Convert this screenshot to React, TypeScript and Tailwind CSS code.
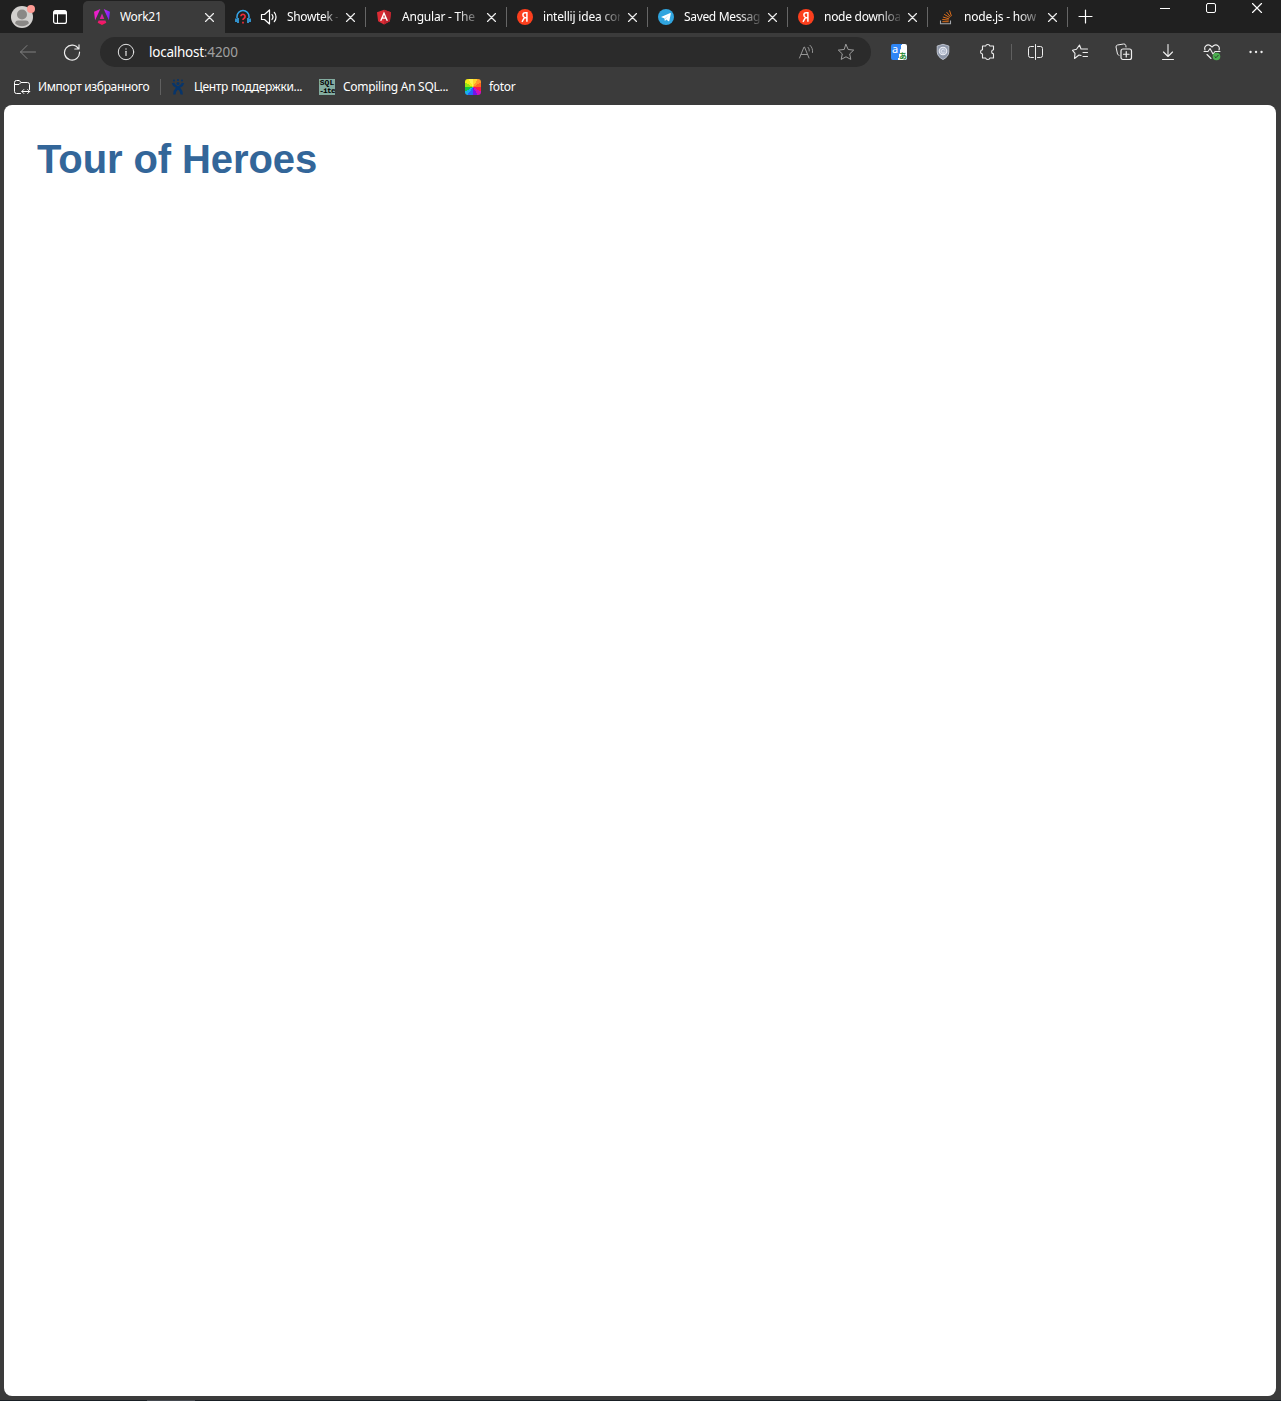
import type { ReactNode } from "react";

type IconProps = { children: ReactNode; className?: string; size?: number };

function Line({ children, className = "", size = 16 }: IconProps) {
  return (
    <svg
      width={size}
      height={size}
      viewBox={`0 0 ${size} ${size}`}
      fill="none"
      stroke="currentColor"
      strokeWidth="1"
      strokeLinecap="round"
      strokeLinejoin="round"
      className={`shrink-0 ${className}`}
    >
      {children}
    </svg>
  );
}

function AngularGradient() {
  return (
    <svg width="16" height="16" viewBox="0 0 16 16" className="shrink-0">
      <defs>
        <linearGradient id="ng" x1="0" y1="0" x2="16" y2="3" gradientUnits="userSpaceOnUse">
          <stop offset="0" stopColor="#f618b8" />
          <stop offset="0.5" stopColor="#d72be8" />
          <stop offset="1" stopColor="#7a22ff" />
        </linearGradient>
        <linearGradient id="ng2" x1="0" y1="5" x2="0" y2="16" gradientUnits="userSpaceOnUse">
          <stop offset="0" stopColor="#c42bc0" />
          <stop offset="1" stopColor="#ff1450" />
        </linearGradient>
      </defs>
      <path d="M0 2.700 6.300 0 1.100 11.200ZM9.700 0 16 2.700 14.900 11.200Z" fill="url(#ng)" />
      <path d="M8 4.600 10.300 10H5.700ZM4.600 11.600h6.800l.9 2.100L8 16l-4.300-2.300Z" fill="url(#ng2)" />
    </svg>
  );
}

function Headphones() {
  return (
    <svg width="16" height="16" viewBox="0 0 16 16" fill="none" className="shrink-0">
      <path d="M2 9V7.500a6 6 0 0 1 12 0V9" stroke="#35a4e8" strokeWidth="1.5" />
      <path d="M1 9.500v3.500M15 9.500v3.500M3 9v5M13 9v5" stroke="#35a4e8" strokeWidth="1.7" />
      <path d="M5.900 7.300a2.100 2.100 0 1 1 3.200 1.900c-.8.4-1.100.8-1.100 1.700M8 12.800v1.700" stroke="#ef2b3a" strokeWidth="1.7" />
    </svg>
  );
}

function AngularShield() {
  return (
    <svg width="16" height="16" viewBox="0 0 16 16" className="shrink-0">
      <path d="M8 .8 15 3.200 13.900 12.300 8 15.600 2.100 12.300 1 3.200Z" fill="#dd2c35" />
      <path d="M8 .8 15 3.200 13.900 12.300 8 15.600Z" fill="#bd242f" />
      <path d="M8 2.600 4 11.800h1.600l.8-2h3.200l.8 2H12ZM8 5.700l1 2.700H7Z" fill="#fff" fillRule="evenodd" />
    </svg>
  );
}

function Yandex() {
  return (
    <svg width="16" height="16" viewBox="0 0 16 16" className="shrink-0">
      <circle cx="8" cy="8" r="8" fill="#fc3f1d" />
      <path d="M9.900 12.800V3.700H8.300c-1.500 0-2.400.8-2.400 2.200 0 1.200.6 1.900 1.600 2.600L5 12.800M7.600 8.700h2.100" fill="none" stroke="#fff" strokeWidth="1.5" />
    </svg>
  );
}

function Telegram() {
  return (
    <svg width="16" height="16" viewBox="0 0 16 16" className="shrink-0">
      <circle cx="8" cy="8" r="8" fill="#30a5df" />
      <path d="M3 7.900 12.300 4.100c.4-.1.600.1.500.6l-1.500 7.200c-.1.500-.4.600-.8.300L8.300 10.600l-1.100 1.100c-.3.200-.5.100-.5-.2l-.2-2.100Z" fill="#fff" />
      <path d="m6.600 9.500 4.200-3.500-3.500 4Z" fill="#b9def2" />
    </svg>
  );
}

function StackOverflow() {
  return (
    <svg width="16" height="16" viewBox="0 0 16 16" fill="none" className="shrink-0">
      <path d="M2.500 11.500v3.200h10v-3.200" stroke="#a5a8ac" strokeWidth="1.1" />
      <path d="M4.300 12.700h6.400M4.300 10.500l6.500.6M4.900 8l6.200 1.900M6.200 5.300l5.500 3.300M8.500 3l4 4.900M11.500 1.300l1.900 5.800" stroke="#e8731b" strokeWidth=".95" />
    </svg>
  );
}

function Speaker() {
  return (
    <Line size={18} className="text-white">
      <path d="M1.500 6.500h3L9.500 2v14l-5-4.500h-3ZM12 6.500c1.200 1.500 1.200 3.500 0 5M14.300 4.300c2.300 2.700 2.300 6.700 0 9.400" strokeWidth="1.2" />
    </Line>
  );
}

function CloseMark() {
  return (
    <Line size={10} className="text-[#eeeeee]">
      <path d="m1.500 1.500 8 8M9.500 1.500l-8 8" strokeWidth="1.15" />
    </Line>
  );
}

type TabData = {
  title: string;
  icon: ReactNode;
  active?: boolean;
  audio?: boolean;
  width: string;
  spacing: string;
};

const tabs: TabData[] = [
  { title: "Work21", icon: <AngularGradient />, active: true, width: "w-[142px]", spacing: "tracking-[-0.3px]" },
  { title: "Showtek -", icon: <Headphones />, audio: true, width: "w-[141px]", spacing: "tracking-[-0.35px]" },
  { title: "Angular - The", icon: <AngularShield />, width: "w-[141px]", spacing: "tracking-[-0.22px]" },
  { title: "intellij idea cor", icon: <Yandex />, width: "w-[141px]", spacing: "tracking-[-0.2px]" },
  { title: "Saved Messag", icon: <Telegram />, width: "w-[140px]", spacing: "tracking-[-0.33px]" },
  { title: "node downloa", icon: <Yandex />, width: "w-[140px]", spacing: "tracking-[-0.28px]" },
  { title: "node.js - how", icon: <StackOverflow />, width: "w-[140px]", spacing: "tracking-[-0.22px]" },
];

function Tab({ title, icon, active, audio, width, spacing }: TabData) {
  return (
    <div
      className={`flex h-8 shrink-0 items-center pr-[11px] ${width} ${
        active ? "rounded-t-[5px] bg-[#3b3b3b] pl-[11px]" : "pl-[10px]"
      }`}
    >
      {icon}
      {audio && <div className="ml-[9px] -mr-px"><Speaker /></div>}
      <div
        className={`ml-[10px] flex-1 overflow-hidden whitespace-nowrap text-[12px] leading-4 text-white ${spacing} ${
          active ? "" : "mask-r-from-72% mask-r-to-105%"
        }`}
      >
        {title}
      </div>
      <div className={active ? "ml-2" : "ml-[7px]"}><CloseMark /></div>
      {!active && <div className="-mr-[11px] ml-[10px] h-5 w-px bg-[#666666]" />}
    </div>
  );
}

function TitleBar() {
  return (
    <div className="flex h-[33px] items-end bg-[#202020]">
      <div className="flex h-8 w-[83px] shrink-0 items-center pl-[10px]">
        <svg width="26" height="26" viewBox="0 0 26 26">
          <circle cx="12" cy="13" r="11" fill="#d2d0ce" />
          <circle cx="12" cy="10.5" r="5" fill="#8a8886" />
          <path d="M5 19.200c.5-2 1.600-2.700 3-2.700h8c1.400 0 2.500.7 3 2.700-3.700 4-10.300 4-14 0Z" fill="#8a8886" />
          <circle cx="21" cy="5" r="4" fill="#ff9b94" />
        </svg>
        <Line className="ml-4 text-white">
          <rect x="1.600" y="1.600" width="12.800" height="12.800" rx="2" strokeWidth="1.2" />
          <path d="M2 3.500h12" strokeWidth="3.6" strokeLinecap="butt" />
          <path d="M5.500 5v9" />
        </Line>
      </div>
      {tabs.map((tab) => <Tab key={tab.title} {...tab} />)}
      <div className="flex h-8 w-[35px] items-center justify-center">
        <Line className="text-white">
          <path d="M7.500 1v13M1 7.500h13" strokeWidth="1.2" />
        </Line>
      </div>
      <div className="ml-auto flex h-[33px] items-start gap-9 pr-[18px] pt-[2px] text-white">
        <Line size={10} className="mt-px"><path d="M0 5.500h10" strokeLinecap="butt" /></Line>
        <Line size={10} className="mt-px"><rect x=".5" y=".5" width="9" height="9" rx="1.500" /></Line>
        <Line size={11}><path d="m.5 1.500 9 9M9.500 1.500l-9 9" strokeWidth="1.15" /></Line>
      </div>
    </div>
  );
}

function AddressBar() {
  return (
    <div className="flex h-[30px] w-[771px] items-center rounded-full bg-[#2b2b2b] pl-[17px] pr-4 text-[#e4e4e4]">
      <Line size={18}>
        <circle cx="9" cy="9" r="7.700" />
        <path d="M9 8.300v4.200" strokeWidth="1.2" />
        <path d="M9 5.900v.1" strokeWidth="1.4" />
      </Line>
      <div className="ml-[14px] text-[13.5px] leading-5 tracking-[-0.25px] text-white">
        localhost<span className="tracking-[-0.1px] text-[#a0a0a0]">:4200</span>
      </div>
      <Line className="ml-auto text-[#9b9b9b]">
        <path d="M1.500 14 6 3h.5L11 14M3.100 10.500h6.300M10 3.300c1 1 1.400 2.300 1.200 3.700M12 1.300c2.200 2 2.900 4.600 2.500 7.200" strokeWidth=".95" />
      </Line>
      <Line size={18} className="ml-[23px] text-[#aaaaaa]">
        <path d="m9 1.500 2.200 5 5.500.6-4 3.800 1.100 5.500L9 13.800l-4.800 2.600 1.100-5.500-4-3.800 5.500-.6Z" strokeWidth=".9" />
      </Line>
    </div>
  );
}

function TranslateIcon() {
  return (
    <span className="grid size-4 shrink-0 grid-cols-2 rounded-[2px] bg-[linear-gradient(103deg,#2f86f5_54%,#ffffff_55%)]">
      <span className="self-start pl-[1px] text-[11px] leading-[9px] text-white">a</span>
      <span className="self-end text-[8px] leading-[9px] font-bold text-[#2d8c35] [font-family:'Noto_Sans_CJK_JP',sans-serif]">あ</span>
    </span>
  );
}

function Toolbar() {
  return (
    <div className="flex h-[37px] items-center bg-[#3b3b3b] text-[#eeeeee]">
      <div className="flex w-[100px] items-center gap-[26px] pl-[19px]">
        <Line size={18} className="text-[#808080]"><path d="M1.500 9h15M8 2.500 1.500 9 8 15.500" /></Line>
        <Line size={18}>
          <path d="M15.600 6A7.500 7.500 0 1 0 16.500 9M16 1.800V6h-4.200" strokeWidth="1.15" />
        </Line>
      </div>
      <AddressBar />
      <div className="ml-5 flex items-center">
        <TranslateIcon />
        <svg width="16" height="18" viewBox="0 0 16 18" className="ml-7">
          <path d="M8 1.300 13.800 3v6c0 3.600-2.800 6-5.800 7.500C5 15 2.200 12.600 2.200 9V3Z" fill="#8f98aa" stroke="#c2c7d2" strokeWidth=".9" />
          <circle cx="8" cy="8" r="3.800" fill="#b4bccd" stroke="#eef0f6" strokeWidth="1.1" />
          <path d="M9.700 7.300a1.900 1.900 0 1 0-.3 2.300" fill="none" stroke="#dfe4ee" />
        </svg>
        <Line className="ml-7" size={18}>
          <path d="M3.500 3h3.200C7 .9 10.500.9 10.800 3h3.700v3.800c-2.500.1-2.500 4 0 4.100V15h-3.600c-.3 2-3.900 2-4.200 0H3.500v-4C.9 10.700.9 7.100 3.500 6.800Z" strokeWidth="1.1" />
        </Line>
        <div className="ml-[14px] h-4 w-px bg-[#606060]" />
        <Line size={16} className="ml-4">
          <path d="M5.500 2.500h-3a2 2 0 0 0-2 2v7a2 2 0 0 0 2 2h3M9.500 2.500h3a2 2 0 0 1 2 2v7a2 2 0 0 1-2 2h-3M7.500.5v15" />
        </Line>
        <Line size={18} className="ml-[27px]">
          <path d="m10 12.500-2-.5-4.500 3.500.5-5.200-2.500-3 4-1L8.500 2 10 6h6.500M12 9.500h4.500M12 13.500h4.500" strokeWidth="1.1" />
        </Line>
        <Line size={18} className="ml-[26px]">
          <path d="M4 12.500 2.500 11 1 4a2 2 0 0 1 1.500-2l6-1a2 2 0 0 1 2.300 1.500L11 4" />
          <rect x="6" y="6" width="10.500" height="10.500" rx="2" strokeWidth="1.2" />
          <path d="M11.250 8.500v5.500M8.500 11.250H14" strokeWidth="1.2" />
        </Line>
        <Line size={16} className="ml-[27px]"><path d="M8 .5v12M3.500 8 8 12.500 12.500 8M2.500 15.500h11" strokeWidth="1.1" /></Line>
        <Line size={18} className="ml-[27px]">
          <path d="M2 7C.6 3.800 4 .7 7.200 2.500L9 4l1.800-1.500C14 .7 17.400 3.800 16 7M1 8.500h4L7 5.500l3 5.500 2-2.500h5M4 11.500 8 15.500" strokeWidth="1.1" />
          <circle cx="13.500" cy="13.500" r="3.800" fill="#4caf50" stroke="none" />
          <path d="m11.900 13.700 1.100 1 2.200-2.400" stroke="#263c28" />
        </Line>
        <Line size={16} className="ml-[27px]">
          <path d="M2.500 8h.1M8 8h.1M13.500 8h.1" strokeWidth="2.3" />
        </Line>
      </div>
    </div>
  );
}

function Bookmarks() {
  return (
    <div className="flex h-[35px] items-center bg-[#3b3b3b] pb-[2px] pl-[13px] text-[12px] leading-4 text-white">
      <Line size={18}>
        <path d="M7.500 15.500h-4a2 2 0 0 1-2-2v-9a2 2 0 0 1 2-2h2.800L8 4.500h6.500a2 2 0 0 1 2 2v5M1.500 6.500H6l2-2M9 13.500h7.500M10.800 11.500l-2 2 2 2M14.700 11.500l2 2-2 2" />
      </Line>
      <div className="ml-[7px] w-[122px] whitespace-nowrap tracking-[-0.34px]">Импорт избранного</div>
      <div className="h-4 w-px bg-[#606060]" />
      <svg width="16" height="16" viewBox="0 0 16 16" className="ml-[9px]">
        <g fill="#07356b">
          <circle cx="4" cy="1.500" r="1" />
          <circle cx="8" cy="1" r="1" />
          <circle cx="12" cy="1.500" r="1" />
          <circle cx="8" cy="4.500" r="1.500" />
        </g>
        <path d="M3 4c.5 3 4 3.500 6.500 6 1.300 1.300 2 3 2.200 5.500M13 4c-.5 3-4 3.500-6.500 6-1.300 1.300-2 3-2.200 5.500" fill="none" stroke="#07356b" strokeWidth="2.5" />
      </svg>
      <div className="ml-2 w-[125px] whitespace-nowrap tracking-[-0.33px]">Центр поддержки...</div>
      <div className="flex size-4 flex-col items-center overflow-hidden bg-[#83aca0] text-[8px] leading-2 font-bold whitespace-nowrap text-black [font-family:'Liberation_Mono',monospace]">
        <span>SQL</span>
        <span className="tracking-[-0.9px]">-ite</span>
      </div>
      <div className="ml-2 w-[122px] whitespace-nowrap tracking-[-0.29px]">Compiling An SQL...</div>
      <div className="size-4 rounded-[3px] bg-[conic-gradient(#ffd52c_0_30deg,#ff982b_30deg_60deg,#ff681f_60deg_90deg,#fa1b45_90deg_120deg,#ce11bc_120deg_150deg,#7314e8_150deg_180deg,#2467f7_180deg_215deg,#19aeef_215deg_240deg,#12c742_240deg_270deg,#99e612_270deg_300deg,#f4ec17_300deg_330deg,#fff24a_330deg)]" />
      <div className="ml-2 whitespace-nowrap tracking-[-0.3px]">fotor</div>
    </div>
  );
}

export default function App() {
  return (
    <div className="flex h-[1401px] w-[1281px] flex-col overflow-hidden bg-[#3b3b3b] [font-family:'Noto_Sans',sans-serif]">
      <TitleBar />
      <Toolbar />
      <Bookmarks />
      <main className="ml-1 mr-[5px] h-[1291px] rounded-lg bg-white pl-[33px] pt-[31px]">
        <h1 className="text-[40px] leading-[46px] font-bold tracking-[-0.1px] text-[#336699] [font-family:'Liberation_Sans',Arial,sans-serif]">
          Tour of Heroes
        </h1>
      </main>
      <div className="mt-1 flex h-px bg-[#191f24]">
        <div className="ml-[147px] w-12 bg-[#454a50]" />
      </div>
    </div>
  );
}
